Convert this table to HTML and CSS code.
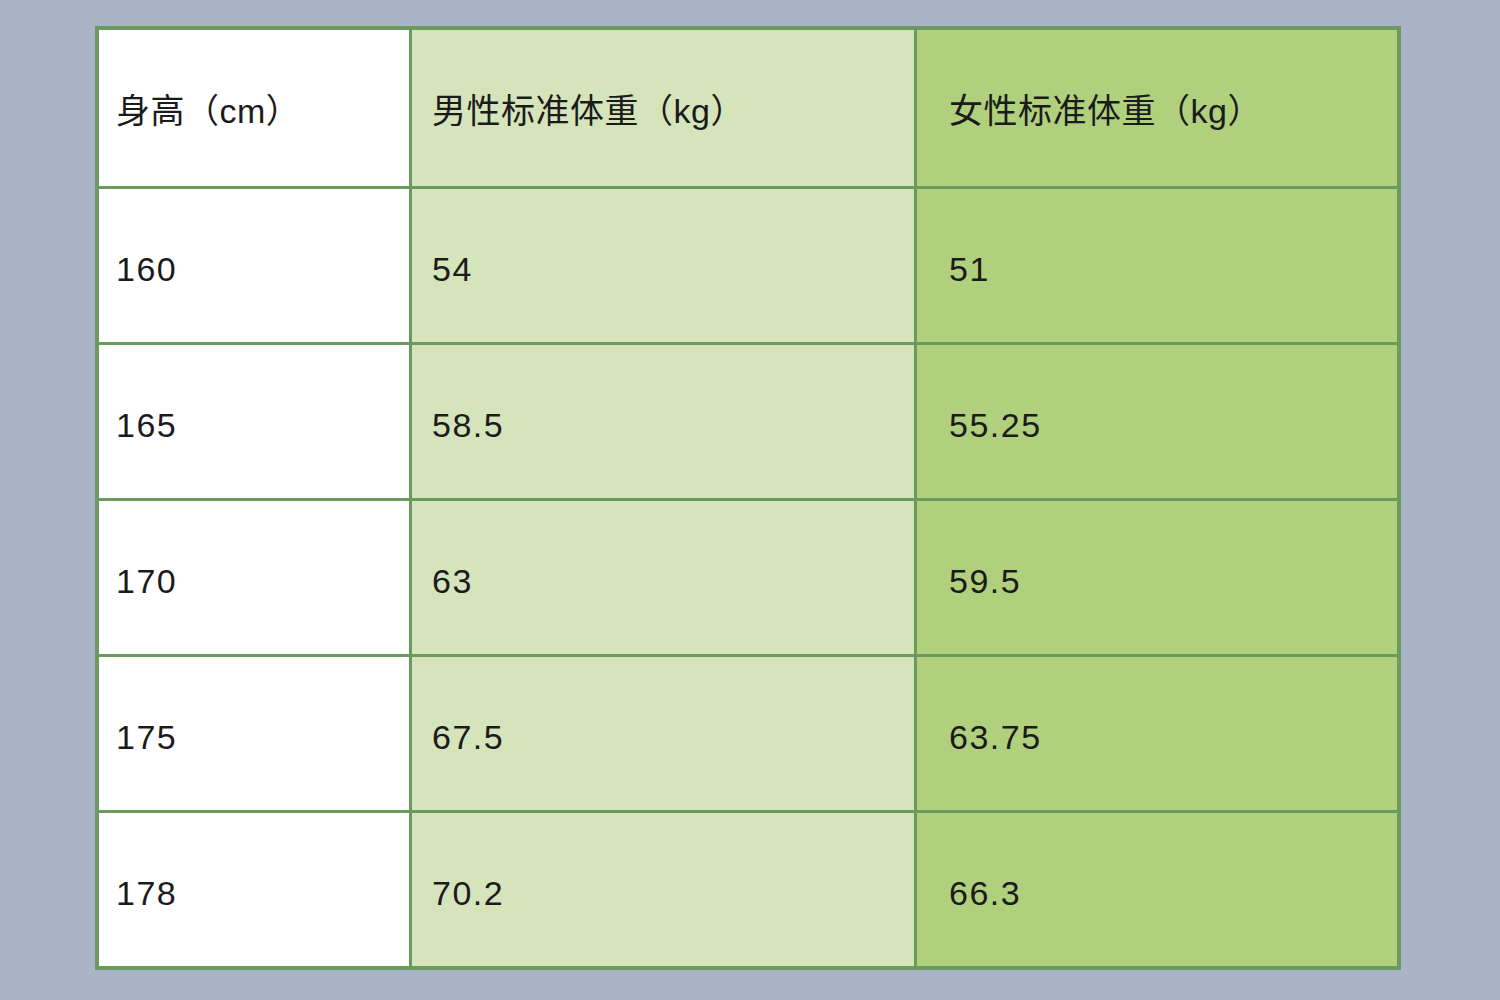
FILE: index.html
```html
<!DOCTYPE html>
<html lang="zh">
<head>
<meta charset="utf-8">
<link rel="stylesheet" href="styles.css">
</head>
<body>
<div class="page">
  <div class="table">
    <div class="cell head c1">身高（cm）</div>
    <div class="cell head c2">男性标准体重（kg）</div>
    <div class="cell head c3">女性标准体重（kg）</div>

    <div class="cell c1">160</div>
    <div class="cell c2">54</div>
    <div class="cell c3">51</div>

    <div class="cell c1">165</div>
    <div class="cell c2">58.5</div>
    <div class="cell c3">55.25</div>

    <div class="cell c1">170</div>
    <div class="cell c2">63</div>
    <div class="cell c3">59.5</div>

    <div class="cell c1">175</div>
    <div class="cell c2">67.5</div>
    <div class="cell c3">63.75</div>

    <div class="cell c1">178</div>
    <div class="cell c2">70.2</div>
    <div class="cell c3">66.3</div>
  </div>
</div>
</body>
</html>
```

FILE: styles.css
```css
html, body {
  margin: 0;
  padding: 0;
}
body {
  background: #a9b5c6;
  width: 1500px;
  height: 1000px;
  overflow: hidden;
}
.page {
  padding: 26px 0 0 95px;
}
.table {
  display: grid;
  grid-template-columns: 310px 502px 480px;
  grid-template-rows: 156px repeat(5, 153px);
  gap: 3px;
  padding: 4px;
  background: #6b9a5f;
  width: max-content;
}
.cell {
  display: flex;
  align-items: center;
  font-family: "Liberation Sans", "Noto Sans CJK SC", sans-serif;
  font-size: 34px;
  letter-spacing: 1.5px;
  color: #1b1b1b;
  padding-top: 8px;
  box-sizing: border-box;
}
.head {
  padding-top: 0;
  letter-spacing: 0.5px;
}
.c1 {
  background: #ffffff;
  padding-left: 17px;
}
.c2 {
  background: #d5e4bb;
  padding-left: 20px;
}
.c3 {
  background: #b1d07e;
  padding-left: 32px;
}
```
